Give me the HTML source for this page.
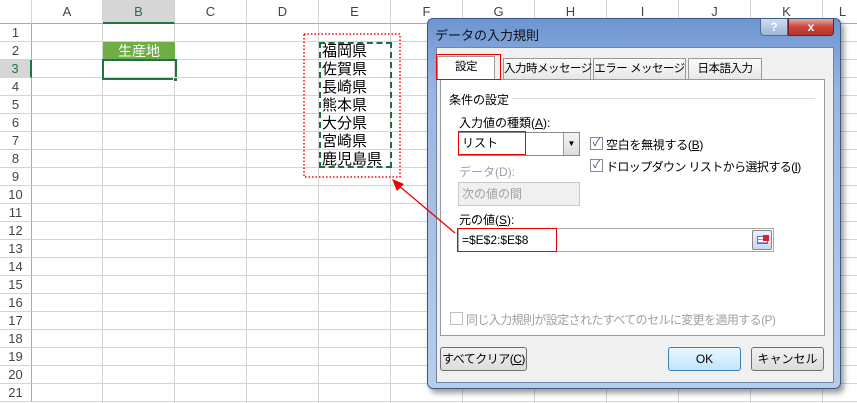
<!DOCTYPE html><html><head><meta charset="utf-8"><style>
*{margin:0;padding:0;box-sizing:border-box;white-space:nowrap}
body{width:857px;height:403px;overflow:hidden;background:#fff;font-family:"Liberation Sans","Noto Sans CJK JP",sans-serif;position:relative;font-size:12px}
.a{position:absolute}
.ch{top:0;height:24px;background:#fff;border-bottom:1px solid #ababab;border-right:1px solid #d4d4d4;text-align:center;line-height:24px;font-size:13px;color:#444}
.rh{left:0;width:32px;height:18px;border-bottom:1px solid #d4d4d4;border-right:1px solid #ababab;text-align:center;line-height:18px;font-size:13px;color:#444;background:#fff}
.hl{height:1px;background:#d4d4d4;left:32px;width:825px}
.vl{width:1px;background:#d4d4d4;top:24px;height:379px}
.dlg{left:427px;top:18px;width:414px;height:371px;background:linear-gradient(#6d95d3,#9ab6e0 20%,#b9cde9);border:1px solid #3b5a86;border-radius:6px;box-shadow:3px 4px 6px rgba(0,0,0,.4)}
.btn{position:absolute;border:1px solid #707070;border-radius:3px;background:linear-gradient(#f2f2f2,#dcdcdc);text-align:center;font-size:12px;line-height:22px}
.tab{position:absolute;top:58px;height:22px;border:1px solid #9a9a9a;border-bottom:none;background:linear-gradient(#fafafa,#e6e6e6);font-size:11.5px;line-height:21px;text-align:center;letter-spacing:-0.5px}
.cb{position:absolute;width:13px;height:13px;border:1px solid #8a8a8a;background:#fff;font-size:11px;line-height:11px;text-align:center;color:#2a4f8f}
</style></head><body>
<div class="a ch" style="left:0;width:32px"></div>
<div class="a ch" style="left:32px;width:71px">A</div>
<div class="a ch" style="left:103px;width:72px;background:#d6d6d6;border-bottom:2px solid #217346;color:#217346">B</div>
<div class="a ch" style="left:175px;width:72px">C</div>
<div class="a ch" style="left:247px;width:72px">D</div>
<div class="a ch" style="left:319px;width:72px">E</div>
<div class="a ch" style="left:391px;width:72px">F</div>
<div class="a ch" style="left:463px;width:72px">G</div>
<div class="a ch" style="left:535px;width:72px">H</div>
<div class="a ch" style="left:607px;width:72px">I</div>
<div class="a ch" style="left:679px;width:72px">J</div>
<div class="a ch" style="left:751px;width:72px">K</div>
<div class="a ch" style="left:823px;width:40px">L</div>
<div id="g"></div>
<script>
var h='';for(var i=1;i<=21;i++){var t=24+(i-1)*18;h+='<div class="a rh" style="top:'+t+'px;'+(i==3?'background:#d6d6d6;border-right:2px solid #217346;color:#217346':'')+'">'+i+'</div><div class="a hl" style="top:'+(t+17)+'px"></div>';}
[103,175,247,319,391,463,535,607,679,751,823].forEach(function(x){h+='<div class="a vl" style="left:'+(x-1)+'px"></div>'});
document.getElementById('g').innerHTML=h;
</script>
<div class="a" style="left:103px;top:42px;width:72px;height:18px;background:#70ad47;color:#fff;text-align:center;font-size:14px;line-height:18px">生産地</div>
<div class="a" style="left:102px;top:59px;width:75px;height:21px;border:2px solid #217346"></div>
<div class="a" style="left:173px;top:77px;width:5px;height:5px;background:#217346;border:1px solid #fff"></div>
<svg class="a" style="left:0;top:0" width="857" height="403"><rect x="304" y="34" width="96" height="143" fill="none" stroke="#f00" stroke-width="1.5" stroke-dasharray="1.5 2"/></svg>
<div class="a" style="left:319px;top:42px;width:73px;height:126px;border:2px dashed #1e6b3c"></div>
<div class="a" style="left:322px;top:43px;font-size:15px;line-height:18px;color:#000">福岡県<br>佐賀県<br>長崎県<br>熊本県<br>大分県<br>宮崎県<br>鹿児島県</div>
<div class="a dlg">
<div class="a" style="left:7px;top:6px;font-size:13px;color:#111">データの入力規則</div>
<div class="a" style="left:332px;top:0;width:28px;height:17px;border:1px solid #4a6a96;border-top:none;border-radius:0 0 0 4px;background:linear-gradient(#cfdcef,#9fb5d6);color:#fff;font-weight:bold;text-align:center;font-size:12px;line-height:16px">?</div>
<div class="a" style="left:360px;top:0;width:46px;height:17px;border:1px solid #6b2020;border-top:none;border-radius:0 0 4px 0;background:linear-gradient(#e9a99d,#c8453a 50%,#b73527);color:#fff;font-weight:bold;text-align:center;font-size:12px;line-height:16px">x</div>
<div class="a" style="left:8px;top:28px;width:398px;height:336px;background:#f0f0f0;border:1px solid #6f86a8"></div>
</div>
<div class="tab" style="left:437px;width:58px;height:24px;top:56px;background:#fff;z-index:2">設定</div>
<div class="tab" style="left:503px;width:88px">入力時メッセージ</div>
<div class="tab" style="left:593px;width:93px">エラー メッセージ</div>
<div class="tab" style="left:688px;width:74px">日本語入力</div>
<div class="a" style="left:440px;top:79px;width:385px;height:257px;background:#fff;border:1px solid #9a9a9a;z-index:1"></div>
<div class="a" style="left:436px;top:54px;width:65px;height:26px;border:1.5px solid #e00;z-index:3"></div>
<div style="position:absolute;z-index:4;left:0;top:0">
<div class="a" style="left:449px;top:91px;font-size:12px">条件の設定</div>
<div class="a" style="left:512px;top:98px;width:303px;height:1px;background:#d5dfe5"></div>
<div class="a" style="left:459px;top:114px">入力値の種類(<u>A</u>):</div>
<div class="a" style="left:458px;top:132px;width:122px;height:24px;border:1px solid #8a8a8a;background:#fff"></div>
<div class="a" style="left:563px;top:133px;width:16px;height:22px;background:linear-gradient(#f4f4f4,#dcdcdc);border-left:1px solid #999;font-size:8px;text-align:center;line-height:22px">▼</div>
<div class="a" style="left:458px;top:131px;width:68px;height:24px;border:1.5px solid #e00;padding-left:3px;line-height:22px;font-size:12px">リスト</div>
<div class="cb" style="left:590px;top:137px">✓</div>
<div class="a" style="left:606px;top:136px;letter-spacing:-0.3px">空白を無視する(<u>B</u>)</div>
<div class="cb" style="left:590px;top:159px">✓</div>
<div class="a" style="left:606px;top:158px;letter-spacing:-0.6px">ドロップダウン リストから選択する(<u>I</u>)</div>
<div class="a" style="left:459px;top:163px;color:#a0a0a0">データ(D):</div>
<div class="a" style="left:458px;top:182px;width:122px;height:24px;border:1px solid #c8c8c8;background:#f0f0f0;color:#a0a0a0;padding-left:3px;line-height:22px">次の値の間</div>
<div class="a" style="left:459px;top:211px">元の値(<u>S</u>):</div>
<div class="a" style="left:458px;top:228px;width:316px;height:24px;border:1px solid #a8a8a8;background:#fff"></div>
<div class="a" style="left:752px;top:230px;width:20px;height:20px;border:1px solid #888;background:linear-gradient(#eef,#cfd7e6);border-radius:2px"><div class="a" style="left:4px;top:5px;width:11px;height:8px;border:1px solid #5070b0;background:repeating-linear-gradient(#fff 0 2px,#7da0d8 2px 3px)"></div><div class="a" style="left:10px;top:4px;width:6px;height:6px;background:#d22"></div></div>
<div class="a" style="left:457px;top:228px;width:100px;height:24px;border:1.5px solid #e00;padding-left:4px;line-height:22px;font-size:12px">=$E$2:$E$8</div>
<div class="cb" style="left:450px;top:312px;border-color:#c0c0c0"></div>
<div class="a" style="left:466px;top:311px;color:#a0a0a0;letter-spacing:-0.6px">同じ入力規則が設定されたすべてのセルに変更を適用する(P)</div>
</div>
<div class="btn" style="left:440px;top:347px;width:87px;height:24px;letter-spacing:-0.5px">すべてクリア(<u>C</u>)</div>
<div class="btn" style="left:668px;top:347px;width:73px;height:24px;border-color:#3c7fb1;background:linear-gradient(#eaf6fd,#bee6fd)">OK</div>
<div class="btn" style="left:751px;top:347px;width:73px;height:24px">キャンセル</div>
<svg class="a" style="left:0;top:0;z-index:5" width="857" height="403"><line x1="455" y1="233" x2="398" y2="185" stroke="#e00" stroke-width="1.3"/><polygon points="392,179 404,184 397,191" fill="#e00"/></svg>
</body></html>
